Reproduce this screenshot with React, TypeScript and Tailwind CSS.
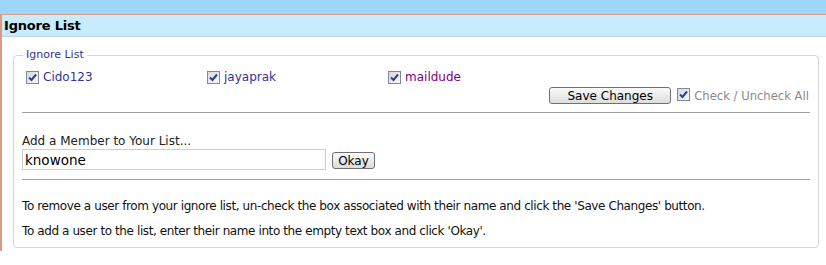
import React from 'react'

const Check: React.FC = () => (
  <span className="inline-flex h-[13px] w-[13px] shrink-0 items-center justify-center border border-[#7f8a99] bg-gradient-to-br from-[#d8d8d8] to-[#f8f8f8]">
    <svg width="9" height="9" viewBox="0 0 9 9">
      <path d="M1 4.5 L3.5 7 L8 1.5" fill="none" stroke="#2f3f8f" strokeWidth="2" />
    </svg>
  </span>
)

const Member: React.FC<{ name: string; color: string }> = ({ name, color }) => (
  <label className="flex w-[181px] items-center gap-[4px]">
    <Check />
    <span className={color}>{name}</span>
  </label>
)

const App: React.FC = () => {
  return (
    <div className="h-[265px] w-[826px] overflow-hidden bg-white font-['DejaVu_Sans',Verdana,sans-serif] text-[11px] leading-[14px]">
      <div className="h-[14px] bg-[#9fd5f7]" />
      <div className="border-l-2 border-t border-[#dc9a82]">
        <div className="flex h-[22px] items-center border-b border-[#bcd6e6] bg-[#c9ecfc] pl-[2px]">
          <h2 className="text-[13px] font-bold tracking-[-0.2px] text-black">Ignore List</h2>
        </div>

        <div className="pb-[3px] pl-[11px] pr-[7px] pt-[11px]">
          <fieldset className="rounded-[4px] border border-[#d5d5d5] pb-[9px] pl-[12px] pr-[8px]">
            <legend className="ml-[-3px] px-[3px] text-[11px] text-[#333399]">Ignore List</legend>

            <div className="mt-[8px] flex text-[12px]">
              <Member name="Cido123" color="text-[#333399]" />
              <Member name="jayaprak" color="text-[#333399]" />
              <Member name="maildude" color="text-[#800080]" />
            </div>

            <div className="mt-[3px] flex items-center justify-end pr-[1px]">
              <button className="h-[17px] w-[122px] rounded-[3px] border border-[#707070] bg-gradient-to-b from-[#fbfbfb] to-[#dcdcdc] text-[12px] text-black">
                Save Changes
              </button>
              <span className="ml-[6px]">
                <Check />
              </span>
              <span className="ml-[4px] text-[11.6px] text-[#8a8a8a]">Check / Uncheck All</span>
            </div>

            <hr className="ml-[-4px] mt-[8px] border-t border-[#a0a0a0]" />

            <div className="ml-[-4px] mt-[21px] text-[12px] text-[#222]">Add a Member to Your List...</div>
            <div className="ml-[-4px] mt-[1px] flex items-center gap-[6px]">
              <input
                readOnly
                value="knowone"
                className="h-[21px] w-[304px] border border-[#cfcfcf] px-[2px] text-[13.5px] text-black outline-none"
              />
              <button className="mt-[2px] h-[17px] w-[43px] rounded-[3px] border border-[#707070] bg-gradient-to-b from-[#fbfbfb] to-[#dcdcdc] text-[12px] text-black">
                Okay
              </button>
            </div>

            <hr className="ml-[-4px] mt-[9px] border-t border-[#a0a0a0]" />

            <p className="ml-[-4px] mt-[19px] text-[12px] tracking-[-0.4px] text-[#111]">
              To remove a user from your ignore list, un-check the box associated with their name and click the 'Save Changes' button.
            </p>
            <p className="ml-[-4px] mt-[11px] text-[12px] tracking-[-0.4px] text-[#111]">
              To add a user to the list, enter their name into the empty text box and click 'Okay'.
            </p>
          </fieldset>
        </div>
      </div>
    </div>
  )
}

export default App
